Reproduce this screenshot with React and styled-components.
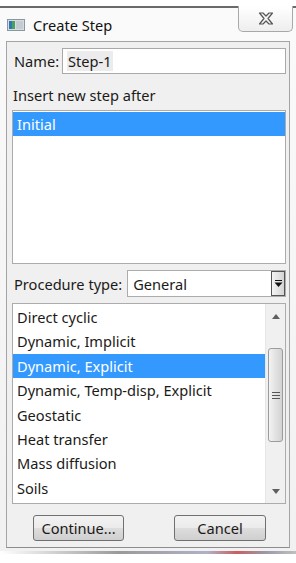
import React from 'react';
import styled, { createGlobalStyle } from 'styled-components';

const GlobalStyle = createGlobalStyle`
    html, body {
        margin: 0;
        padding: 0;
        background: #ffffff;
    }
    body {
        font-family: "Noto Sans", "Open Sans", sans-serif;
        font-size: 14.6px;
        color: #1c1a18;
    }
`

const procedures = [
    'Direct cyclic',
    'Dynamic, Implicit',
    'Dynamic, Explicit',
    'Dynamic, Temp-disp, Explicit',
    'Geostatic',
    'Heat transfer',
    'Mass diffusion',
    'Soils',
]

const Page = styled.div`
    width: 296px;
    height: 563px;
    overflow: hidden;
    background: #ffffff;
    padding-top: 6px;
    box-sizing: border-box;
`

const Window = styled.div`
    border-top: 2px solid #6a6a6a;
    background: linear-gradient(#fafafa, #f1f1f1);
    display: flex;
    flex-direction: column;
`

const TitleBar = styled.div`
    height: 33px;
    display: flex;
    align-items: center;
    padding-left: 7px;
    position: relative;
    gap: 8px;
`

const Title = styled.span`
    font-size: 14.6px;
    color: #111;
    padding-top: 1px;
`

const CloseButton = styled.div`
    position: absolute;
    top: -2px;
    left: 238px;
    width: 53px;
    height: 25px;
    border: 1px solid #a8a8a8;
    border-top: none;
    border-radius: 0 0 5px 5px;
    background: linear-gradient(#ffffff, #eeeeee);
    display: flex;
    align-items: center;
    justify-content: center;
`

const Panel = styled.div`
    margin-left: 6px;
    width: 284px;
    height: 507px;
    box-sizing: border-box;
    border: 1px solid #a4a4a4;
    border-bottom-color: #8c8c8c;
    background: #f0f0f0;
    padding: 6px 3px 0 5px;
    display: flex;
    flex-direction: column;
`

const Row = styled.div`
    display: flex;
    align-items: center;
    gap: ${props => props.gap}px;
    margin-left: ${props => props.indent || 0}px;
    margin-top: ${props => props.top || 0}px;
`

const Label = styled.span`
    white-space: nowrap;
`

const TextField = styled.div`
    flex: 1;
    height: 24px;
    border: 1px solid #a9a9a9;
    background: #ffffff;
    display: flex;
    align-items: center;
    padding-left: 4px;
    & span {
        background: #ececec;
        padding: 0 1px;
    }
`

const Caption = styled.div`
    margin: 12px 0 0 1px;
    height: 18px;
    line-height: 18px;
`

const ListBox = styled.div`
    height: ${props => props.height}px;
    margin-top: ${props => props.top}px;
    border: 1px solid #acacac;
    background: #ffffff;
    display: flex;
    overflow: hidden;
`

const Items = styled.div`
    flex: 1;
    padding-top: 1px;
`

const Item = styled.div`
    height: 24.4px;
    line-height: 24px;
    padding-left: 4px;
    background: ${props => props.selected ? '#3399ff' : 'transparent'};
    color: ${props => props.selected ? '#ffffff' : '#1c1a18'};
    white-space: nowrap;
`

const Combo = styled.div`
    flex: 1;
    height: 25px;
    border: 1px solid #acacac;
    background: #ffffff;
    display: flex;
    align-items: center;
    padding-left: 5px;
    justify-content: space-between;
`

const DropButton = styled.div`
    width: 12px;
    height: 23px;
    border: 1px solid #555;
    background: linear-gradient(90deg, #f4f4f4, #d4d4d4);
    display: flex;
    align-items: center;
    justify-content: center;
`

const ScrollBar = styled.div`
    width: 19px;
    background: #f0f0f0;
    border-left: 1px solid #e6e6e6;
    display: flex;
    flex-direction: column;
    align-items: center;
`

const Arrow = styled.div`
    height: 24px;
    display: flex;
    align-items: center;
    justify-content: center;
`

const Thumb = styled.div`
    width: 15px;
    height: 94px;
    margin-top: ${props => props.offset}px;
    border: 1px solid #9c9c9c;
    border-radius: 3px;
    box-sizing: border-box;
    background: linear-gradient(90deg, #f3f3f3, #e2e2e2 50%, #d3d3d3);
    display: flex;
    align-items: center;
    justify-content: center;
`

const Spacer = styled.div`
    flex: 1;
`

const ButtonRow = styled.div`
    display: flex;
    gap: 50px;
    margin: 11px 0 0 21px;
`

const Button = styled.div`
    width: ${props => props.w}px;
    height: 24px;
    border: 1px solid #707070;
    border-radius: 3px;
    background: linear-gradient(#f2f2f2 0%, #ebebeb 50%, #dddddd 51%, #cfcfcf 100%);
    display: flex;
    align-items: center;
    justify-content: center;
`

const BottomStrip = styled.div`
    height: 3px;
    margin-top: 3px;
    background: linear-gradient(90deg, #ffffff 0%, #9a9a9a 40%, #b0b0c8 70%, #c86060 80%, #9a9aaa 90%, #c0c0c0 100%);
`

function WindowIcon() {
    return (
        <svg width="18" height="12" viewBox="0 0 18 12">
            <rect x="0.5" y="0.5" width="17" height="11" fill="#d8dde2" stroke="#8a96a0" />
            <rect x="2" y="2" width="5" height="8" fill="#2a7ab0" />
            <rect x="5" y="2" width="3" height="8" fill="#4aa060" />
            <rect x="9" y="2" width="7" height="8" fill="#c4ccd2" />
        </svg>
    )
}

function CloseGlyph() {
    return (
        <svg width="16" height="13" viewBox="0 0 16 13">
            <path d="M1.5 1 L5 1 L8 4 L11 1 L14.5 1 L10 6.5 L14.5 12 L11 12 L8 9 L5 12 L1.5 12 L6 6.5 Z"
                fill="#f4f4f4" stroke="#555" strokeWidth="1.2" strokeLinejoin="round" />
        </svg>
    )
}

function DownGlyph() {
    return (
        <svg width="9" height="9" viewBox="0 0 9 9">
            <rect x="1" y="1" width="7" height="1" fill="#111" />
            <path d="M0.5 3.5 L8.5 3.5 L4.5 8 Z" fill="#111" />
        </svg>
    )
}

function SmallArrow({ up }) {
    return (
        <svg width="8" height="5" viewBox="0 0 8 5">
            <path d={up ? 'M0 5 L8 5 L4 0 Z' : 'M0 0 L8 0 L4 5 Z'} fill="#606060" />
        </svg>
    )
}

function Grip() {
    return (
        <svg width="8" height="7" viewBox="0 0 8 7">
            <rect x="0" y="0" width="8" height="1" fill="#555" />
            <rect x="0" y="3" width="8" height="1" fill="#555" />
            <rect x="0" y="6" width="8" height="1" fill="#555" />
        </svg>
    )
}

export default function App() {
    return (
        <Page>
            <GlobalStyle />
            <Window>
                <TitleBar>
                    <WindowIcon />
                    <Title>Create Step</Title>
                    <CloseButton><CloseGlyph /></CloseButton>
                </TitleBar>
                <Panel>
                    <Row gap={3} indent={2}>
                        <Label>Name:</Label>
                        <TextField><span>Step-1</span></TextField>
                    </Row>
                    <Caption>Insert new step after</Caption>
                    <ListBox height={152} top={6}>
                        <Items>
                            <Item selected>Initial</Item>
                        </Items>
                    </ListBox>
                    <Row gap={5} indent={2} top={6}>
                        <Label>Procedure type:</Label>
                        <Combo>
                            <span>General</span>
                            <DropButton><DownGlyph /></DropButton>
                        </Combo>
                    </Row>
                    <ListBox height={199} top={6}>
                        <Items>
                            {procedures.map(p => (
                                <Item key={p} selected={p === 'Dynamic, Explicit'}>{p}</Item>
                            ))}
                        </Items>
                        <ScrollBar>
                            <Arrow><SmallArrow up /></Arrow>
                            <Thumb offset={20}><Grip /></Thumb>
                            <Spacer />
                            <Arrow><SmallArrow /></Arrow>
                        </ScrollBar>
                    </ListBox>
                    <ButtonRow>
                        <Button w={89}>Continue...</Button>
                        <Button w={90}>Cancel</Button>
                    </ButtonRow>
                </Panel>
                <BottomStrip />
            </Window>
        </Page>
    )
}
